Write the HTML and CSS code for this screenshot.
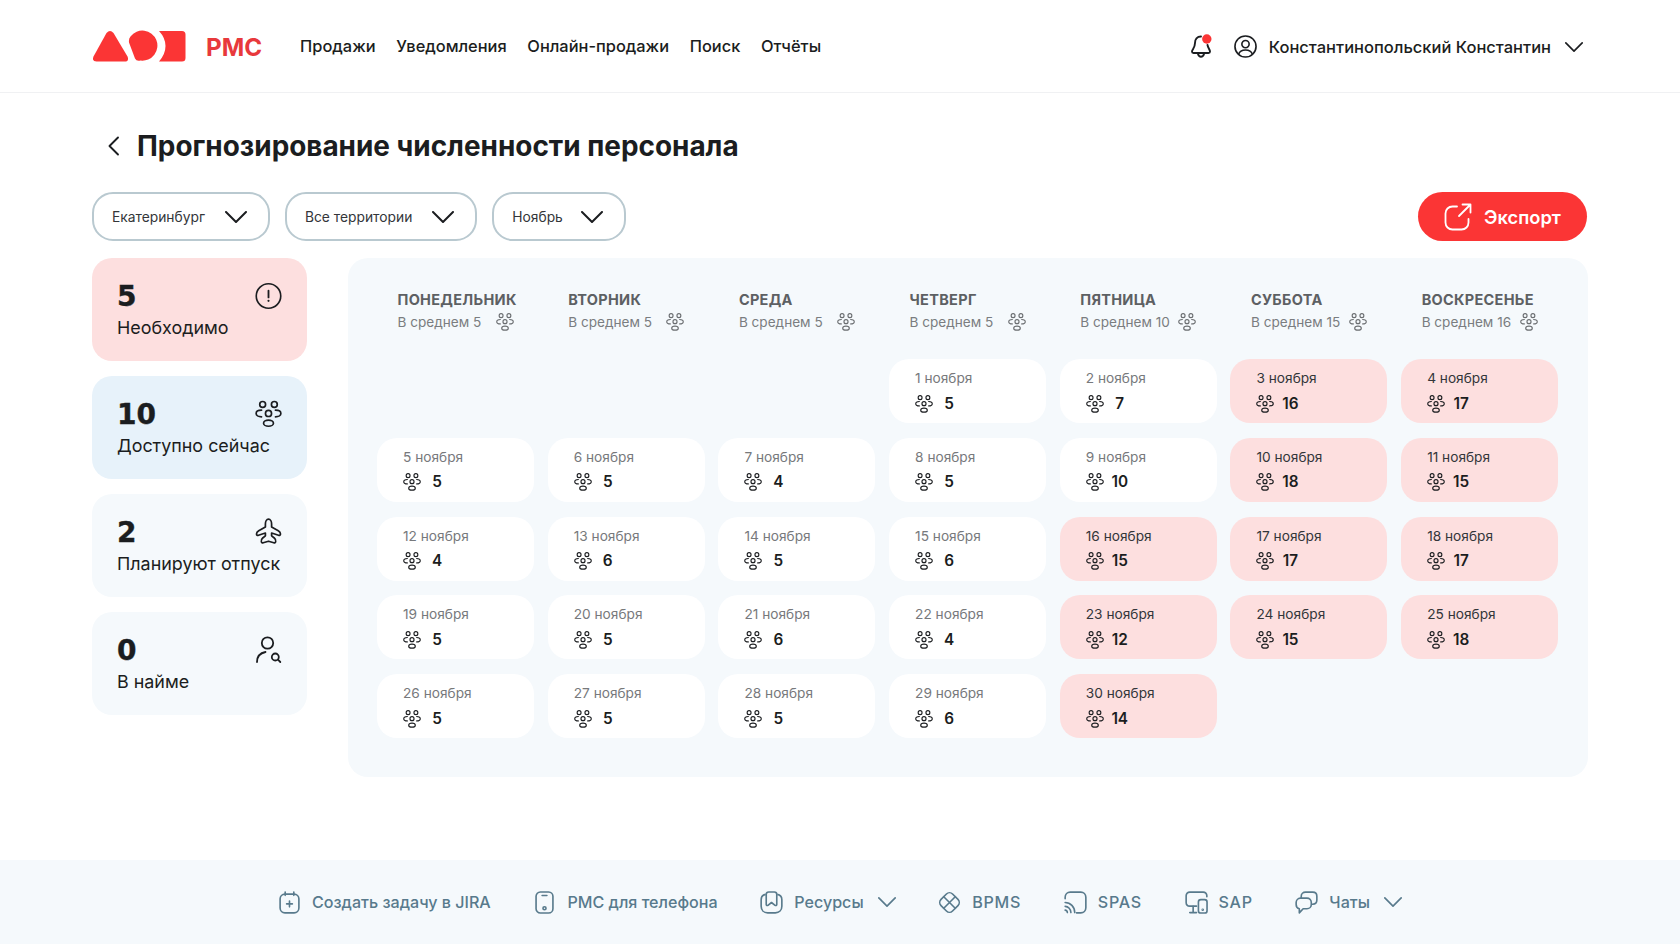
FILE: index.html
```html
<!DOCTYPE html>
<html lang="ru">
<head>
<meta charset="utf-8">
<title>Прогнозирование численности персонала</title>
<link rel="stylesheet" href="styles.css">
</head>
<body>
<svg class="sprite" xmlns="http://www.w3.org/2000/svg">
  <symbol id="i-group" viewBox="0 0 24 24"><g fill="none" stroke="currentColor" stroke-width="1.500" stroke-linecap="round"><circle cx="6.800" cy="3.500" r="2.600"/><circle cx="17.200" cy="3.500" r="2.600"/><circle cx="12" cy="11.500" r="2.700"/><ellipse cx="12" cy="20.200" rx="4.400" ry="2.700"/><path d="M5.800 8.600C2.900 8.600 1 9.900 1 11.500s1.900 3 4.800 3"/><path d="M18.200 8.600c2.900 0 4.800 1.300 4.800 2.900s-1.900 3-4.800 3"/></g></symbol>
  <symbol id="i-chev" viewBox="0 0 22 12"><path d="M1 1l10 10L21 1" fill="none" stroke="currentColor" stroke-width="2" stroke-linecap="round" stroke-linejoin="round"/></symbol>
  <symbol id="i-alert" viewBox="0 0 28 28"><circle cx="14" cy="14" r="12.700" fill="none" stroke="currentColor" stroke-width="1.700"/><path d="M14 8.500v7" stroke="currentColor" stroke-width="1.900" stroke-linecap="round"/><circle cx="14" cy="19" r="1.100" fill="currentColor"/></symbol>
  <symbol id="i-plane" viewBox="0 0 26 28"><path d="M13 1.200c1.900 0 3.100 2.500 3.100 4.900v2.900l6.700 3.700c1.400.8 2.200 1.900 2.200 3.300 0 1.100-.9 1.700-2 1.300l-6.900-2.300v2.800l2.700 2.200c1.300 1.100 1.700 2.400 1.400 3.700-.2 1-1 1.400-1.900 1L13 23.200l-5.300 1.500c-.9.400-1.700 0-1.900-1-.3-1.300.1-2.600 1.400-3.700l2.700-2.200V15L3 17.300c-1.100.4-2-.2-2-1.300 0-1.400.8-2.500 2.200-3.300L9.900 9V6.100c0-2.400 1.200-4.900 3.100-4.900z" fill="none" stroke="currentColor" stroke-width="1.700" stroke-linejoin="round"/></symbol>
  <symbol id="i-hire" viewBox="0 0 26 28"><g fill="none" stroke="currentColor" stroke-width="1.800" stroke-linecap="round"><circle cx="12" cy="7" r="5.700"/><path d="M1.500 26c0-5.500 3.500-9 8.500-10"/><circle cx="19.800" cy="21" r="3.500"/><path d="M22.500 23.700l2.300 2.300"/></g></symbol>
  <symbol id="i-cal" viewBox="0 0 22 24"><g fill="none" stroke="currentColor" stroke-width="1.700" stroke-linecap="round"><rect x="1.200" y="3.200" width="19.600" height="19.600" rx="5"/><path d="M6.500 1v3.500M15.500 1v3.500M11 10.500v6M8 13.500h6"/></g></symbol>
  <symbol id="i-phone" viewBox="0 0 20 24"><g fill="none" stroke="currentColor" stroke-width="1.700" stroke-linecap="round"><rect x="1.200" y="1" width="17.600" height="22" rx="4.500"/><path d="M7.500 4.700h5"/><circle cx="10" cy="18" r="1.600"/></g></symbol>
  <symbol id="i-book" viewBox="0 0 24 24"><g fill="none" stroke="currentColor" stroke-width="1.700" stroke-linejoin="round"><path d="M6 3.500C3 4 1.200 6 1.200 9v7c0 4 2.800 6.800 6.800 6.800h8c4 0 6.800-2.800 6.800-6.800V9c0-3-1.800-5-4.800-5.500"/><path d="M6.500 3.500c0-1.500 1-2.500 2.500-2.500h6c1.500 0 2.500 1 2.500 2.500V14c0 1-1 1.500-1.800.9L12 12l-3.700 2.900c-.8.600-1.800.1-1.800-.9z"/></g></symbol>
  <symbol id="i-bpms" viewBox="0 0 24 24"><g fill="none" stroke="currentColor" stroke-width="1.700" stroke-linejoin="round"><rect x="3.500" y="3.500" width="17" height="17" rx="4.500" transform="rotate(45 12 12)"/><path d="M5.500 5.500l13 13M18.500 5.500l-13 13"/></g></symbol>
  <symbol id="i-cast" viewBox="0 0 24 24"><g fill="none" stroke="currentColor" stroke-width="1.700" stroke-linecap="round"><path d="M1.200 8V6.500C1.200 3.500 3.500 1.200 6.500 1.200h11c3 0 5.300 2.300 5.300 5.300v11c0 3-2.300 5.300-5.300 5.300H13"/><path d="M1.200 12c5.500 0 10 4.500 10 10.500M1.200 16c3.300 0 6 3 6 6.500M1.200 20c1.300 0 2.300 1.200 2.300 2.500"/></g></symbol>
  <symbol id="i-sap" viewBox="0 0 24 24"><g fill="none" stroke="currentColor" stroke-width="1.700" stroke-linecap="round" stroke-linejoin="round"><path d="M22.800 6V5c0-2.200-1.600-3.800-3.800-3.800H5C2.800 1.200 1.200 2.800 1.200 5v7c0 2.200 1.600 3.800 3.800 3.800h7"/><path d="M8.500 16v6.500h3.500M5 22.500h3.500"/><rect x="14" y="9" width="9" height="14" rx="2.500"/><circle cx="18.500" cy="19.500" r=".5"/></g></symbol>
  <symbol id="i-chat" viewBox="0 0 24 24"><g fill="none" stroke="currentColor" stroke-width="1.700" stroke-linejoin="round"><path d="M6.500 7.500V5.500C6.500 3 8.500 1.200 11 1.200h7.500c2.500 0 4.300 1.800 4.300 4.300v4c0 2.500-1.800 4.300-4.300 4.300h-1.500"/><path d="M5.500 7.500h7c2.500 0 4.500 2 4.500 4.500v2c0 2.500-2 4.500-4.500 4.500H8.500L4.500 22.800v-4.300C2.500 18 1.200 16.300 1.200 14v-2c0-2.500 2-4.500 4.300-4.500z"/></g></symbol>
</svg>

<header class="topbar">
  <div class="brand">
    <svg class="logo" viewBox="0 0 93 32" aria-hidden="true"><g fill="#fb3535"><path d="M13.500 3Q17-1 20.500 3L34.500 26.500Q36.500 31.500 31.500 31.500H3.500Q-1.500 31.500.5 26.500Z"/><path d="M37.500 6.500A15 15 0 1 1 47.500 30.500Q43.500 31.500 42 28.500L36 12.500Q35.500 8.500 37.500 6.500Z"/><path d="M66 1H89Q92.500 1 92.500 4.500V28Q92.500 31.500 89 31.500H66Q72.500 24 72.500 16Q72.500 8 66 1Z"/></g></svg>
    <span class="brand-name">РМС</span>
  </div>
  <nav class="nav">
    <a>Продажи</a><a>Уведомления</a><a>Онлайн-продажи</a><a>Поиск</a><a>Отчёты</a>
  </nav>
  <div class="user">
    <span class="bell">
      <svg class="bell-icon" viewBox="0 0 21 24" aria-hidden="true"><g fill="none" stroke="#1b1d20" stroke-width="1.900" stroke-linejoin="round" stroke-linecap="round"><path d="M10 2.500C6 2.500 4 5.500 4 9c0 5-3 6.500-3 8.500 0 1 .7 1.500 1.500 1.500h15c.8 0 1.500-.5 1.500-1.500 0-2-2-3.500-2.500-6.500"/><path d="M7 20c.5 1.800 1.700 2.800 3 2.800s2.500-1 3-2.800"/></g><circle cx="15.800" cy="5" r="4.700" fill="#fb3535"/></svg>
    </span>
    <svg class="avatar" viewBox="0 0 24 24" aria-hidden="true"><g fill="none" stroke="#1b1d20" stroke-width="1.700"><circle cx="12" cy="12" r="11"/><circle cx="12" cy="9.500" r="3.800"/><path d="M4.800 20c1-3 3.500-4.300 7.200-4.300s6.200 1.300 7.200 4.300"/></g></svg>
    <span class="user-name">Константинопольский Константин</span>
    <svg class="chev user-chev"><use href="#i-chev"/></svg>
  </div>
</header>

<main class="page">
  <div class="title-row">
    <svg class="back" viewBox="0 0 12 20" aria-hidden="true"><path d="M10.500 1.500L2 10l8.500 8.500" fill="none" stroke="#1b1d20" stroke-width="1.900" stroke-linecap="round" stroke-linejoin="round"/></svg>
    <h1>Прогнозирование численности персонала</h1>
  </div>

  <div class="toolbar">
    <button class="select">Екатеринбург<svg class="chev"><use href="#i-chev"/></svg></button>
    <button class="select">Все территории<svg class="chev"><use href="#i-chev"/></svg></button>
    <button class="select select-short">Ноябрь<svg class="chev"><use href="#i-chev"/></svg></button>
    <button class="export">
      <svg class="export-icon" viewBox="0 0 28 28" aria-hidden="true"><g fill="none" stroke="#fff" stroke-width="1.800" stroke-linecap="round" stroke-linejoin="round"><path d="M13 3.500H8.500C4.500 3.500 1.500 6.500 1.500 10.500v9c0 4 3 7 7 7h9c4 0 7-3 7-7V16"/><path d="M15 13L26 2M18.500 1.500H26.500V9.500"/></g></svg>
      Экспорт
    </button>
  </div>

  <div class="content">
    <aside class="stats">
      <div class="stat stat-red"><div class="stat-top"><b>5</b><svg class="stat-icon"><use href="#i-alert"/></svg></div><span>Необходимо</span></div>
      <div class="stat stat-blue"><div class="stat-top"><b>10</b><svg class="stat-icon"><use href="#i-group"/></svg></div><span>Доступно сейчас</span></div>
      <div class="stat"><div class="stat-top"><b>2</b><svg class="stat-icon"><use href="#i-plane"/></svg></div><span>Планируют отпуск</span></div>
      <div class="stat"><div class="stat-top"><b>0</b><svg class="stat-icon"><use href="#i-hire"/></svg></div><span>В найме</span></div>
    </aside>

    <section class="panel">
      <div class="weekdays">
        <div class="wd"><b>ПОНЕДЕЛЬНИК</b><span class="wd-sub">В среднем 5<svg class="ic"><use href="#i-group"/></svg></span></div>
        <div class="wd"><b>ВТОРНИК</b><span class="wd-sub">В среднем 5<svg class="ic"><use href="#i-group"/></svg></span></div>
        <div class="wd"><b>СРЕДА</b><span class="wd-sub">В среднем 5<svg class="ic"><use href="#i-group"/></svg></span></div>
        <div class="wd"><b>ЧЕТВЕРГ</b><span class="wd-sub">В среднем 5<svg class="ic"><use href="#i-group"/></svg></span></div>
        <div class="wd"><b>ПЯТНИЦА</b><span class="wd-sub">В среднем 10<svg class="ic"><use href="#i-group"/></svg></span></div>
        <div class="wd"><b>СУББОТА</b><span class="wd-sub">В среднем 15<svg class="ic"><use href="#i-group"/></svg></span></div>
        <div class="wd"><b>ВОСКРЕСЕНЬЕ</b><span class="wd-sub">В среднем 16<svg class="ic"><use href="#i-group"/></svg></span></div>
      </div>
      <div class="days">
        <div class="day first"><span class="date">1 ноября</span><span class="cnt"><svg class="ic"><use href="#i-group"/></svg><b>5</b></span></div>
        <div class="day"><span class="date">2 ноября</span><span class="cnt"><svg class="ic"><use href="#i-group"/></svg><b>7</b></span></div>
        <div class="day hot"><span class="date">3 ноября</span><span class="cnt"><svg class="ic"><use href="#i-group"/></svg><b>16</b></span></div>
        <div class="day hot"><span class="date">4 ноября</span><span class="cnt"><svg class="ic"><use href="#i-group"/></svg><b>17</b></span></div>

        <div class="day"><span class="date">5 ноября</span><span class="cnt"><svg class="ic"><use href="#i-group"/></svg><b>5</b></span></div>
        <div class="day"><span class="date">6 ноября</span><span class="cnt"><svg class="ic"><use href="#i-group"/></svg><b>5</b></span></div>
        <div class="day"><span class="date">7 ноября</span><span class="cnt"><svg class="ic"><use href="#i-group"/></svg><b>4</b></span></div>
        <div class="day"><span class="date">8 ноября</span><span class="cnt"><svg class="ic"><use href="#i-group"/></svg><b>5</b></span></div>
        <div class="day"><span class="date">9 ноября</span><span class="cnt"><svg class="ic"><use href="#i-group"/></svg><b>10</b></span></div>
        <div class="day hot"><span class="date">10 ноября</span><span class="cnt"><svg class="ic"><use href="#i-group"/></svg><b>18</b></span></div>
        <div class="day hot"><span class="date">11 ноября</span><span class="cnt"><svg class="ic"><use href="#i-group"/></svg><b>15</b></span></div>

        <div class="day"><span class="date">12 ноября</span><span class="cnt"><svg class="ic"><use href="#i-group"/></svg><b>4</b></span></div>
        <div class="day"><span class="date">13 ноября</span><span class="cnt"><svg class="ic"><use href="#i-group"/></svg><b>6</b></span></div>
        <div class="day"><span class="date">14 ноября</span><span class="cnt"><svg class="ic"><use href="#i-group"/></svg><b>5</b></span></div>
        <div class="day"><span class="date">15 ноября</span><span class="cnt"><svg class="ic"><use href="#i-group"/></svg><b>6</b></span></div>
        <div class="day hot"><span class="date">16 ноября</span><span class="cnt"><svg class="ic"><use href="#i-group"/></svg><b>15</b></span></div>
        <div class="day hot"><span class="date">17 ноября</span><span class="cnt"><svg class="ic"><use href="#i-group"/></svg><b>17</b></span></div>
        <div class="day hot"><span class="date">18 ноября</span><span class="cnt"><svg class="ic"><use href="#i-group"/></svg><b>17</b></span></div>

        <div class="day"><span class="date">19 ноября</span><span class="cnt"><svg class="ic"><use href="#i-group"/></svg><b>5</b></span></div>
        <div class="day"><span class="date">20 ноября</span><span class="cnt"><svg class="ic"><use href="#i-group"/></svg><b>5</b></span></div>
        <div class="day"><span class="date">21 ноября</span><span class="cnt"><svg class="ic"><use href="#i-group"/></svg><b>6</b></span></div>
        <div class="day"><span class="date">22 ноября</span><span class="cnt"><svg class="ic"><use href="#i-group"/></svg><b>4</b></span></div>
        <div class="day hot"><span class="date">23 ноября</span><span class="cnt"><svg class="ic"><use href="#i-group"/></svg><b>12</b></span></div>
        <div class="day hot"><span class="date">24 ноября</span><span class="cnt"><svg class="ic"><use href="#i-group"/></svg><b>15</b></span></div>
        <div class="day hot"><span class="date">25 ноября</span><span class="cnt"><svg class="ic"><use href="#i-group"/></svg><b>18</b></span></div>

        <div class="day"><span class="date">26 ноября</span><span class="cnt"><svg class="ic"><use href="#i-group"/></svg><b>5</b></span></div>
        <div class="day"><span class="date">27 ноября</span><span class="cnt"><svg class="ic"><use href="#i-group"/></svg><b>5</b></span></div>
        <div class="day"><span class="date">28 ноября</span><span class="cnt"><svg class="ic"><use href="#i-group"/></svg><b>5</b></span></div>
        <div class="day"><span class="date">29 ноября</span><span class="cnt"><svg class="ic"><use href="#i-group"/></svg><b>6</b></span></div>
        <div class="day hot"><span class="date">30 ноября</span><span class="cnt"><svg class="ic"><use href="#i-group"/></svg><b>14</b></span></div>
      </div>
    </section>
  </div>
</main>

<footer class="footer">
  <a class="flink"><svg class="fi"><use href="#i-cal"/></svg>Создать задачу в JIRA</a>
  <a class="flink"><svg class="fi"><use href="#i-phone"/></svg>РМС для телефона</a>
  <a class="flink"><svg class="fi"><use href="#i-book"/></svg>Ресурсы<svg class="chev foot-chev"><use href="#i-chev"/></svg></a>
  <a class="flink flink-latin"><svg class="fi"><use href="#i-bpms"/></svg>BPMS</a>
  <a class="flink flink-latin"><svg class="fi"><use href="#i-cast"/></svg>SPAS</a>
  <a class="flink flink-latin"><svg class="fi"><use href="#i-sap"/></svg>SAP</a>
  <a class="flink"><svg class="fi"><use href="#i-chat"/></svg>Чаты<svg class="chev foot-chev"><use href="#i-chev"/></svg></a>
</footer>
</body>
</html>
```
FILE: styles.css
```css
* { box-sizing: border-box; }
html, body { margin: 0; padding: 0; }
body {
  width: 1680px;
  height: 944px;
  overflow: hidden;
  display: flex;
  flex-direction: column;
  background: #fff;
  color: #1b1d20;
  font-family: "Inter", "Noto Sans", sans-serif;
}
.sprite { display: none; }

/* header */
.topbar {
  height: 93px;
  flex: none;
  display: flex;
  align-items: center;
  padding: 0 97px 0 93px;
  border-bottom: 1px solid #f0f1f3;
}
.brand { display: flex; align-items: center; gap: 20px; }
.logo { width: 93px; height: 32px; display: block; }
.brand-name { color: #e8393c; font-weight: 700; font-size: 24.200px; line-height: 32px; padding-top: 4px; }
.nav { display: flex; gap: 20.700px; margin-left: 38px; font-size: 16.400px; font-weight: 500; }
.user { margin-left: auto; display: flex; align-items: center; }
.bell { display: flex; }
.bell-icon { width: 21px; height: 24px; }
.avatar { width: 23px; height: 23px; margin-left: 22px; }
.user-name { margin-left: 12px; padding-top: 2px; font-size: 16.500px; font-weight: 500; }
.chev { width: 22px; height: 12px; color: #1b1d20; flex: none; }
.user-chev { width: 18px; height: 10px; margin-left: 14px; margin-top: 2px; }

/* page */
.page { padding: 0 92px 0 92px; }
.title-row { display: flex; align-items: center; gap: 17px; margin-top: 36px; padding-left: 15px; }
.back { width: 13px; height: 20px; flex: none; }
h1 { margin: 0; font-size: 27.900px; line-height: 34px; font-weight: 700; }

.toolbar { display: flex; align-items: center; gap: 15px; margin-top: 29px; }
.select {
  height: 49px;
  display: flex;
  align-items: center;
  gap: 20px;
  padding: 0 21px 0 18px;
  border: 2px solid #b9c9d0;
  border-radius: 21px;
  background: #fff;
  color: #33363a;
  font: 400 13.800px "Inter", sans-serif;
}
.select-short { gap: 18px; }
.export {
  margin-left: auto;
  margin-right: 1px;
  height: 49px;
  width: 169px;
  padding-bottom: 1px;
  display: flex;
  align-items: center;
  justify-content: center;
  gap: 12px;
  border: 0;
  border-radius: 25px;
  background: #fb3535;
  color: #fff;
  font: 600 18.300px "Inter", sans-serif;
}
.export-icon { width: 28px; height: 28px; }

.content { display: flex; gap: 41px; margin-top: 17px; }
.stats { width: 215px; flex: none; display: flex; flex-direction: column; gap: 15px; }
.stat {
  height: 103px;
  padding: 23px 25px 0;
  border-radius: 20px;
  background: #f5f9fc;
  font-size: 17.900px;
}
.stat span { display: block; margin-top: 3px; line-height: 24px; white-space: nowrap; }
.stat-red { background: #fddfdf; }
.stat-blue { background: #e7f2fa; }
.stat-top { display: flex; justify-content: space-between; align-items: center; height: 32px; }
.stat-top b { font: 700 28px/32px "DejaVu Sans", sans-serif; -webkit-text-stroke: .4px #1b1d20; }
.stat-icon { width: 27px; height: 28px; margin-top: -3px; color: #1b1d20; }

.panel {
  flex: 1;
  height: 519px;
  padding: 32px 29px 40px 29px;
  border-radius: 20px;
  background: #f5f9fc;
}
.weekdays, .days {
  display: grid;
  grid-template-columns: repeat(7, 157px);
  column-gap: 13.700px;
}
.wd { padding-left: 20.500px; color: #5d6063; }
.wd b { display: block; font-size: 14.500px; line-height: 20px; font-weight: 700; letter-spacing: .3px; }
.wd-sub {
  width: 116px;
  margin-top: 2px;
  display: flex;
  justify-content: space-between;
  align-items: center;
  font-size: 13.600px;
  line-height: 20px;
  color: #7a7d80;
  white-space: nowrap;
}
.ic { width: 18px; height: 18px; flex: none; }
.wd-sub .ic { color: #6a6d70; }

.days { margin-top: 27px; grid-auto-rows: 64px; row-gap: 14.750px; }
.day { padding: 9px 25px 0 26px; border-radius: 20px; background: #fff; }
.day.first { grid-column-start: 4; }
.day.hot { background: #fddfdf; }
.date { display: block; font-size: 13.700px; line-height: 20px; color: #77797c; white-space: nowrap; }
.hot .date { color: #33363a; }
.cnt { display: flex; align-items: center; margin-top: 6.500px; }
.cnt b { min-width: 20px; margin-left: 6px; text-align: center; font-size: 15.300px; line-height: 18px; font-weight: 600; color: #1b1d20; }

/* footer */
.footer {
  height: 84px;
  margin-top: auto;
  flex: none;
  display: flex;
  align-items: center;
  justify-content: center;
  gap: 42.700px;
  background: #f5f9fc;
  color: #587a8c;
  font-size: 16.100px;
  font-weight: 500;
}
.flink { display: flex; align-items: center; gap: 11px; }
.flink-latin { letter-spacing: .7px; }
.fi { width: 23px; height: 23px; flex: none; }
.foot-chev { width: 18px; height: 10px; margin-left: 3px; color: #587a8c; }
```
